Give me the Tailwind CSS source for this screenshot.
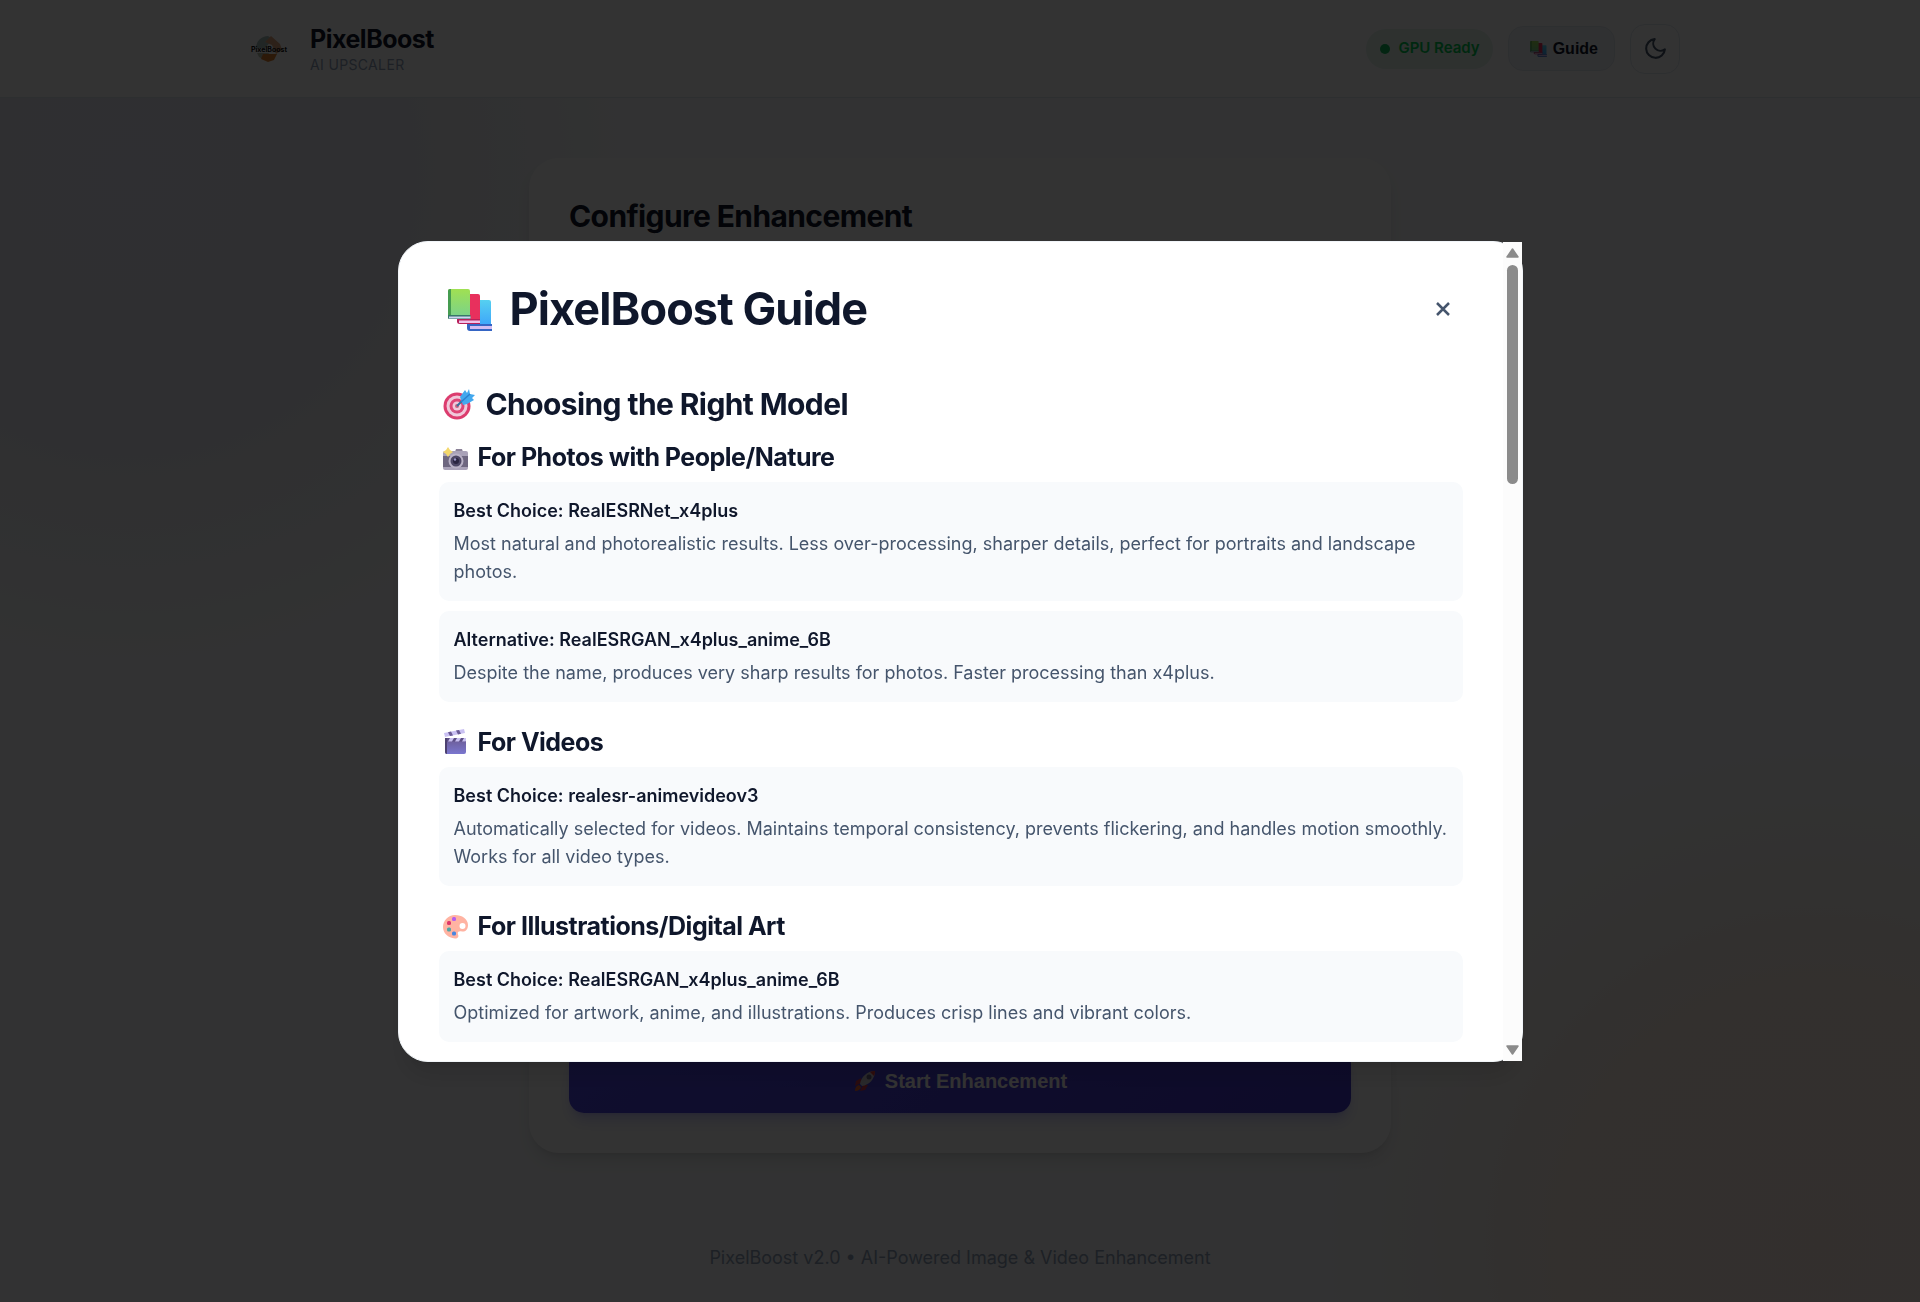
<!DOCTYPE html>
<html lang="en">
<head>
  <meta charset="utf-8">
  <meta name="viewport" content="width=device-width, initial-scale=1.0" />
  <title>PixelBoost - AI Upscaler</title>
  <script src="https://cdn.jsdelivr.net/npm/@tailwindcss/browser@4"></script>
</head>
<body class="bg-slate-50 font-['Inter','Noto_Sans',sans-serif] text-slate-900">

  <!-- shared emoji drawing -->
  <svg class="absolute w-0 h-0" aria-hidden="true">
    <defs>
      <linearGradient id="gGreen" x1="0" y1="0" x2="0" y2="1"><stop offset="0" stop-color="#a0e052"/><stop offset="1" stop-color="#7bd389"/></linearGradient>
      <linearGradient id="gBlue" x1="0" y1="0" x2="0" y2="1"><stop offset="0" stop-color="#56d0f0"/><stop offset="1" stop-color="#3fa8fa"/></linearGradient>
      <linearGradient id="gClap" x1="0" y1="0" x2="0" y2="1"><stop offset="0" stop-color="#6b5b92"/><stop offset="1" stop-color="#7a76cf"/></linearGradient>
      <symbol id="books" viewBox="0 0 56 56">
        <path d="M29 21q0-2 2-2h19q2 0 2 2v22H29z" fill="url(#gBlue)"/>
        <path d="M28 43h25v2H31v3h22v2H31q-3 0-3-3z" fill="#3565c4"/>
        <path d="M31 45h22v3H31z" fill="#d3bdf2"/>
        <path d="M19 14.500q0-1.500 2-1.500h18q2 0 2 2v24H19z" fill="#e8305d"/>
        <path d="M18 38h23v5H21q-3 0-3-2.500z" fill="#b8205b"/>
        <path d="M20 39.500h21V42H20z" fill="#efc2e8"/>
        <path d="M9 10q0-2 2-2h18q2 0 2 2v25H9z" fill="url(#gGreen)"/>
        <path d="M9 10q0-2 2-2h1v27H9z" fill="#459c50"/>
        <path d="M9 34h22.500v4H10q-1 0-1-1.500z" fill="#37776b"/>
        <path d="M10 35.500h21.500V37.500H10z" fill="#cfd5f2"/>
      </symbol>
    </defs>
  </svg>

  <div class="min-h-screen flex flex-col bg-[radial-gradient(circle_at_130px_170px,#ebebf7_0px,#ebebf5_270px,#f2f4f7_400px,#f8fafc_490px,transparent_491px),radial-gradient(circle_at_calc(100%-100px)_calc(100%-60px),#feece2_0px,#fcede6_260px,#f9f6f3_400px,#f8fafc_490px)]">

    <!-- Header -->
    <header class="bg-white border-b border-slate-200">
      <div class="max-w-[1440px] h-[97px] mx-auto flex items-center justify-between">
        <div class="flex items-center gap-[14px]">
          <svg class="w-14 h-14" viewBox="0 0 56 56" role="img" aria-label="PixelBoost logo">
            <path d="M16 27a12 12 0 0 1 12-12l5 3-8 9z" fill="#a6bfbb"/>
            <path d="M25 21l6-6 9 8 2 6-6 4-4-9z" fill="#e0a57c"/>
            <path d="M17 32h12l-4 7-6-3z" fill="#b9c2ae"/>
            <path d="M23 33h14l-3 6-6 2-7-3z" fill="#dd7f31"/>
            <text x="29" y="31" text-anchor="middle" font-size="7" font-weight="700" fill="#111">PixelBoost</text>
          </svg>
          <div>
            <div class="text-[25px] leading-8 font-bold tracking-[-0.02em]">PixelBoost</div>
            <div class="text-sm leading-5 tracking-wide text-slate-400">AI UPSCALER</div>
          </div>
        </div>
        <div class="flex items-center gap-[15px]">
          <div class="flex items-center gap-2 h-10 pl-[14px] pr-[13px] rounded-full bg-[#e3f3ec] text-green-500 text-[15px] font-semibold">
            <span class="w-[10px] h-[10px] rounded-full bg-[#10b95a]"></span>
            GPU Ready
          </div>
          <button class="flex items-center gap-[5px] h-[45px] pl-[18px] pr-4 rounded-[15px] border border-slate-200 bg-slate-100 font-['Liberation_Sans',sans-serif] text-base font-bold">
            <svg class="w-[21px] h-[21px]"><use href="#books"/></svg>
            Guide
          </button>
          <button class="flex items-center justify-center w-[50px] h-[50px] rounded-[15px] border border-slate-200 text-slate-600" aria-label="Toggle theme">
            <svg class="w-[25px] h-[25px]" viewBox="0 0 24 24" fill="none" stroke="currentColor" stroke-width="2" stroke-linecap="round" stroke-linejoin="round"><path d="M21 12.790A9 9 0 1 1 11.210 3 7 7 0 0 0 21 12.790z"/></svg>
          </button>
        </div>
      </div>
    </header>

    <!-- Upscale form -->
    <main class="flex-1 flex flex-col w-[862px] max-w-full mx-auto pt-[60px]">
      <section class="flex-1 flex flex-col justify-between p-10 rounded-[30px] bg-white shadow-lg">
        <h2 class="text-[30px] leading-9 font-bold tracking-[-0.02em]">Configure Enhancement</h2>
        <button class="flex items-center justify-center gap-2 h-16 rounded-[15px] bg-linear-135 from-[#4f46e5] to-[#4338ca] shadow-lg shadow-indigo-500/30 text-white font-['Liberation_Sans',sans-serif] text-xl font-bold">
          <svg class="w-6 h-6" viewBox="0 0 24 24">
            <path d="M8 9l-5 3-1 5 6-3zM15 16l-3 5-5 1 3-6z" fill="#d03a4b"/>
            <path d="M7 15C8 8 14 2 22 2c0 8-6 14-13 15z" fill="#cdc9d6"/>
            <path d="M17 3q2-1 5-1 0 3-1 5z" fill="#e23b3b"/>
            <circle cx="16" cy="8" r="2.500" fill="#6b6580"/>
            <path d="M2 22q0-5 4-6l2 2q-1 4-6 4z" fill="#f0652f"/>
          </svg>
          Start Enhancement
        </button>
      </section>
    </main>

    <footer class="h-[149px] pt-[91px] text-center text-lg leading-7 text-slate-400">PixelBoost v2.0 • AI-Powered Image &amp; Video Enhancement</footer>
  </div>

  <!-- Guide modal -->
  <div class="fixed inset-0 flex items-center justify-center bg-black/80">
    <div role="dialog" aria-labelledby="guideTitle" class="w-[1125px] max-w-full flex bg-white border border-slate-100 rounded-[30px] shadow-xl">
      <div class="flex-1 pt-10 px-10 pb-[19px]">

        <div class="flex items-center justify-between h-[54px] mb-[44px]">
          <h1 id="guideTitle" class="flex items-center gap-[15px] text-[45px] leading-[54px] font-bold tracking-[-0.02em]">
            <svg class="w-14 h-14"><use href="#books"/></svg>
            PixelBoost Guide
          </h1>
          <button class="flex items-center justify-center w-10 h-10 text-slate-600" aria-label="Close">
            <svg class="w-[14px] h-[14px]" viewBox="0 0 14 14" fill="none" stroke="currentColor" stroke-width="2.500"><path d="M1 1l12 12M13 1L1 13"/></svg>
          </button>
        </div>

        <h2 class="flex items-center gap-[7px] mb-[9px] text-[30px] leading-[48px] font-bold tracking-[-0.02em]">
          <svg class="w-10 h-10" viewBox="0 0 40 40">
            <circle cx="18" cy="22" r="13.500" fill="#dc3c6e"/>
            <circle cx="18" cy="22" r="10.500" fill="#f0c8da"/>
            <circle cx="18" cy="22" r="7.500" fill="#df4576"/>
            <circle cx="18" cy="22" r="4.500" fill="#f0c8da"/>
            <circle cx="18" cy="22" r="2" fill="#c9627f"/>
            <path d="M18 22l9-9" stroke="#35719c" stroke-width="2"/>
            <path d="M21 13l5-7 2 3 2-4 1 5 5 1-3 3 2 2-7 4-4 1z" fill="#43a8ee"/>
            <path d="M22 18l9-8" stroke="#2b7fd0" stroke-width="1.500"/>
          </svg>
          Choosing the Right Model
        </h2>

        <div class="flex flex-col gap-5">
          <section>
            <h3 class="flex items-center gap-[7px] mb-[5px] text-[25px] leading-10 font-bold tracking-[-0.02em]">
              <svg class="w-8 h-8" viewBox="0 0 32 32">
                <path d="M17 8h6l1 3h-8z" fill="#8b8298"/>
                <rect x="4" y="10" width="25" height="19" rx="2" fill="#a9a2b8"/>
                <rect x="4" y="15" width="25" height="11" fill="#6e6780"/>
                <circle cx="17" cy="20" r="7.500" fill="#b9b2c6"/>
                <circle cx="17" cy="20" r="5.500" fill="#4d4765"/>
                <circle cx="17" cy="20" r="3" fill="#2a2541"/>
                <circle cx="16" cy="18.500" r="1.200" fill="#9d97c8"/>
                <path d="M9 6l2 3 3 2-3 2-2 3-2-3-3-2 3-2z" fill="#f4d86c"/>
              </svg>
              For Photos with People/Nature
            </h3>
            <div class="flex flex-col gap-[10px]">
              <div class="p-[15px] rounded-[10px] bg-slate-50">
                <h4 class="mb-[5px] text-lg leading-7 font-semibold">Best Choice: RealESRNet_x4plus</h4>
                <p class="text-lg leading-7 text-slate-600">Most natural and photorealistic results. Less over-processing, sharper details, perfect for portraits and landscape photos.</p>
              </div>
              <div class="p-[15px] rounded-[10px] bg-slate-50">
                <h4 class="mb-[5px] text-lg leading-7 font-semibold">Alternative: RealESRGAN_x4plus_anime_6B</h4>
                <p class="text-lg leading-7 text-slate-600">Despite the name, produces very sharp results for photos. Faster processing than x4plus.</p>
              </div>
            </div>
          </section>

          <section>
            <h3 class="flex items-center gap-[7px] mb-[5px] text-[25px] leading-10 font-bold tracking-[-0.02em]">
              <svg class="w-8 h-8" viewBox="0 0 32 32">
                <path d="M5 7l20-4 1 4L6 11z" fill="#c9c0f2"/>
                <path d="M9 6.200l3-.600 2 3.800-3 .600zM17 4.600l3-.600 2 3.800-3 .600z" fill="#6a5a94"/>
                <path d="M6 12h21v14q0 2-2 2H8q-2 0-2-2z" fill="url(#gClap)"/>
                <path d="M6 12h21v3.500H6z" fill="#5c4e84"/>
                <path d="M11 12h4l-2 3.500H9zM18 12h4l-2 3.500h-4zM25 12h2v3l-.500.500H23z" fill="#c9c0f2"/>
                <path d="M6 12h2v16q-2 0-2-2z" fill="#4c4170"/>
              </svg>
              For Videos
            </h3>
            <div class="p-[15px] rounded-[10px] bg-slate-50">
              <h4 class="mb-[5px] text-lg leading-7 font-semibold">Best Choice: realesr-animevideov3</h4>
              <p class="text-lg leading-7 text-slate-600">Automatically selected for videos. Maintains temporal consistency, prevents flickering, and handles motion smoothly. Works for all video types.</p>
            </div>
          </section>

          <section>
            <h3 class="flex items-center gap-[7px] mb-[5px] text-[25px] leading-10 font-bold tracking-[-0.02em]">
              <svg class="w-8 h-8" viewBox="0 0 32 32">
                <path fill-rule="evenodd" d="M16 5c7 0 13 4 13 10 0 5-3 7-6 6.500-3-.500-5 0-4 3 1 2 0 4-3 4C9 28 4 23 4 17S9 5 16 5zm7.500 8a3 3 0 1 0 0 6 3 3 0 0 0 0-6z" fill="#ffb3a2"/>
                <rect x="13" y="7" width="4" height="4" rx="1.500" fill="#b45cf0"/>
                <rect x="8" y="11" width="4" height="4" rx="1.500" fill="#df3569"/>
                <rect x="8" y="17.500" width="4" height="4" rx="1.500" fill="#4fa5a6"/>
                <rect x="13" y="21.500" width="4" height="4" rx="1.500" fill="#4a86e0"/>
              </svg>
              For Illustrations/Digital Art
            </h3>
            <div class="p-[15px] rounded-[10px] bg-slate-50">
              <h4 class="mb-[5px] text-lg leading-7 font-semibold">Best Choice: RealESRGAN_x4plus_anime_6B</h4>
              <p class="text-lg leading-7 text-slate-600">Optimized for artwork, anime, and illustrations. Produces crisp lines and vibrant colors.</p>
            </div>
          </section>
        </div>
      </div>

      <!-- Scrollbar -->
      <div class="w-[19px] flex flex-col items-center py-[6px] bg-[#fcfcfc]" aria-hidden="true">
        <svg class="w-[13px] h-[10px]" viewBox="0 0 13 10"><path d="M6.500 1L12 9H1z" fill="#8b8b8b" stroke="#8b8b8b" stroke-width="1.500" stroke-linejoin="round"/></svg>
        <div class="w-[11px] h-[219px] mt-[7px] mb-auto rounded-full bg-[#8b8b8b]"></div>
        <svg class="w-[13px] h-[10px]" viewBox="0 0 13 10"><path d="M6.500 9L12 1H1z" fill="#8b8b8b" stroke="#8b8b8b" stroke-width="1.500" stroke-linejoin="round"/></svg>
      </div>
    </div>
  </div>

</body>
</html>
